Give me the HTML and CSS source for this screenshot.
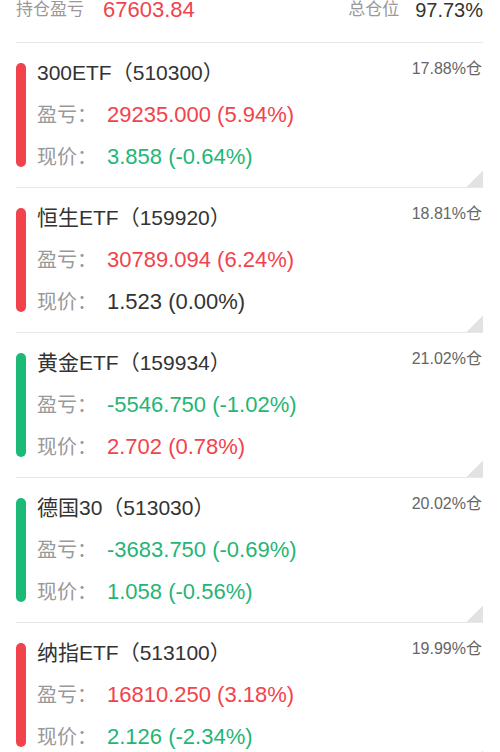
FILE: index.html
```html
<!DOCTYPE html>
<html lang="zh-CN">
<head>
    <meta charset="UTF-8">
    <meta name="viewport" content="width=device-width, initial-scale=1.0">
    <title>持仓</title>
    <link rel="stylesheet" href="styles.css">
</head>
<body>
    <div id="summary">
        <div class="summary-item">
            <span class="summary-label">持仓盈亏</span>
            <span class="summary-value total-pnl up">67603.84</span>
        </div>
        <div class="summary-item">
            <span class="summary-label">总仓位</span>
            <span class="summary-value">97.73%</span>
        </div>
    </div>

    <div id="position-list">
        <div class="position">
            <div class="bar bar-up"></div>
            <div class="info">
                <div class="title-row">
                    <span class="name">300ETF（510300）</span>
                    <span class="weight">17.88%仓</span>
                </div>
                <div class="row"><span class="label">盈亏：</span><span class="value up">29235.000 (5.94%)</span></div>
                <div class="row"><span class="label">现价：</span><span class="value down">3.858 (-0.64%)</span></div>
            </div>
        </div>

        <div class="position">
            <div class="bar bar-up"></div>
            <div class="info">
                <div class="title-row">
                    <span class="name">恒生ETF（159920）</span>
                    <span class="weight">18.81%仓</span>
                </div>
                <div class="row"><span class="label">盈亏：</span><span class="value up">30789.094 (6.24%)</span></div>
                <div class="row"><span class="label">现价：</span><span class="value">1.523 (0.00%)</span></div>
            </div>
        </div>

        <div class="position">
            <div class="bar bar-down"></div>
            <div class="info">
                <div class="title-row">
                    <span class="name">黄金ETF（159934）</span>
                    <span class="weight">21.02%仓</span>
                </div>
                <div class="row"><span class="label">盈亏：</span><span class="value down">-5546.750 (-1.02%)</span></div>
                <div class="row"><span class="label">现价：</span><span class="value up">2.702 (0.78%)</span></div>
            </div>
        </div>

        <div class="position">
            <div class="bar bar-down"></div>
            <div class="info">
                <div class="title-row">
                    <span class="name">德国30（513030）</span>
                    <span class="weight">20.02%仓</span>
                </div>
                <div class="row"><span class="label">盈亏：</span><span class="value down">-3683.750 (-0.69%)</span></div>
                <div class="row"><span class="label">现价：</span><span class="value down">1.058 (-0.56%)</span></div>
            </div>
        </div>

        <div class="position">
            <div class="bar bar-up"></div>
            <div class="info">
                <div class="title-row">
                    <span class="name">纳指ETF（513100）</span>
                    <span class="weight">19.99%仓</span>
                </div>
                <div class="row"><span class="label">盈亏：</span><span class="value up">16810.250 (3.18%)</span></div>
                <div class="row"><span class="label">现价：</span><span class="value down">2.126 (-2.34%)</span></div>
            </div>
        </div>
    </div>
</body>
</html>
```

FILE: styles.css
```css
body {
    margin: 0;
    background-color: #fff;
    font-family: 'Liberation Sans', 'Noto Sans CJK SC', sans-serif;
    color: #333;
    overflow: hidden;
}

#summary {
    display: flex;
    justify-content: space-between;
    align-items: flex-start;
    height: 42px;
    margin: 0 17px 0 16px;
    border-bottom: 1px solid #e8e8e8;
    line-height: 20px;
}

.summary-item {
    display: flex;
    align-items: center;
}

.summary-label {
    font-size: 17px;
    color: #999;
    margin-right: 16px;
}

.summary-value {
    font-size: 20px;
    color: #333;
}

.total-pnl {
    font-size: 22px;
    margin-left: 3px;
}

#position-list {
    margin: 0 17px 0 16px;
}

.position {
    display: flex;
    padding: 20px 0;
    border-bottom: 1px solid #e8e8e8;
    background: linear-gradient(135deg, transparent 50%, #e2e2e2 50%) no-repeat right bottom / 16px 16px;
}

.bar {
    width: 10px;
    height: 104px;
    border-radius: 5px;
    margin-right: 11px;
}

.bar-up {
    background-color: #f2434c;
}

.bar-down {
    background-color: #1dba77;
}

.info {
    flex: 1;
    display: flex;
    flex-direction: column;
    gap: 22px;
}

.title-row {
    display: flex;
    justify-content: space-between;
    align-items: flex-start;
}

.name {
    font-size: 21px;
    line-height: 20px;
    color: #333;
}

.weight {
    font-size: 16px;
    line-height: 11px;
    color: #666;
    margin-right: 1px;
}

.row {
    display: flex;
    align-items: center;
    line-height: 20px;
}

.label {
    font-size: 20px;
    color: #999;
    width: 70px;
}

.value {
    font-size: 22px;
    color: #333;
}

.up {
    color: #f2434c;
}

.down {
    color: #1fb676;
}
```
